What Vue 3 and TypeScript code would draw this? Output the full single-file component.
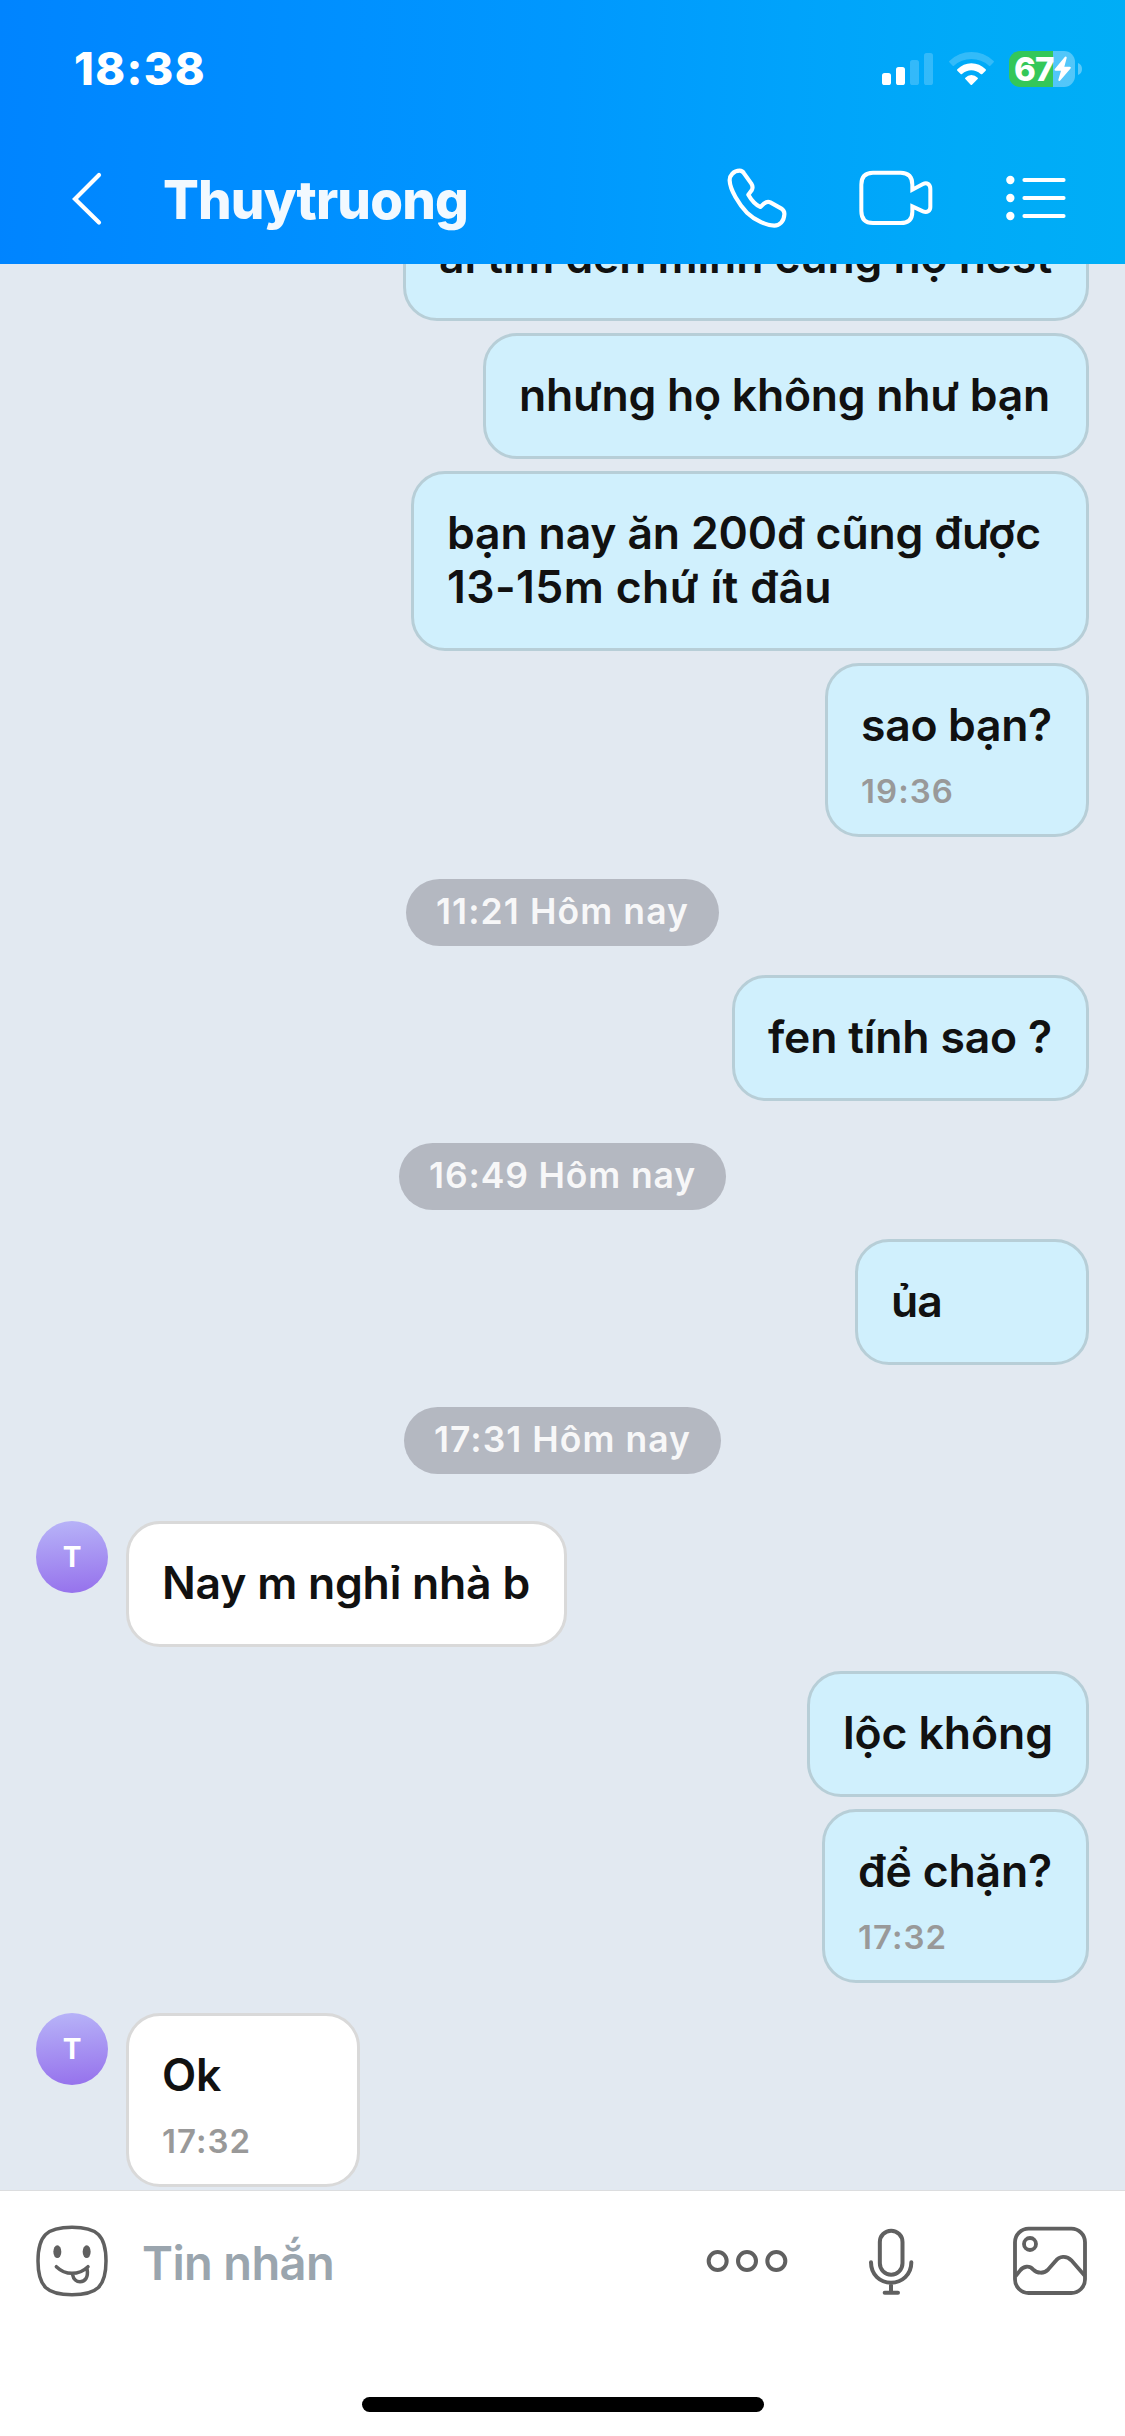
<script setup lang="ts">
interface Line { text: string; width: number }
interface Entry {
  kind: 'sent' | 'received' | 'date'
  lines: Line[]
  time?: Line
  width?: number
  gap: number
}

const entries: Entry[] = [
  { kind: 'sent', lines: [{ text: 'ai tìm đến mình cũng họ nest', width: 613 }], width: 686, gap: 0 },
  { kind: 'sent', lines: [{ text: 'nhưng họ không như bạn', width: 531 }], width: 606, gap: 12 },
  {
    kind: 'sent',
    lines: [
      { text: 'bạn nay ăn 200đ cũng được', width: 594 },
      { text: '13-15m chứ ít đâu', width: 385 },
    ],
    width: 678,
    gap: 12,
  },
  { kind: 'sent', lines: [{ text: 'sao bạn?', width: 191 }], time: { text: '19:36', width: 93 }, width: 264, gap: 12 },
  { kind: 'date', lines: [{ text: '11:21 Hôm nay', width: 253 }], gap: 42 },
  { kind: 'sent', lines: [{ text: 'fen tính sao ?', width: 284 }], width: 357, gap: 29 },
  { kind: 'date', lines: [{ text: '16:49 Hôm nay', width: 267 }], gap: 42 },
  { kind: 'sent', lines: [{ text: 'ủa', width: 51 }], width: 234, gap: 29 },
  { kind: 'date', lines: [{ text: '17:31 Hôm nay', width: 257 }], gap: 42 },
  { kind: 'received', lines: [{ text: 'Nay m nghỉ nhà b', width: 368 }], width: 441, gap: 47 },
  { kind: 'sent', lines: [{ text: 'lộc không', width: 210 }], width: 282, gap: 24 },
  { kind: 'sent', lines: [{ text: 'để chặn?', width: 194 }], time: { text: '17:32', width: 89 }, width: 267, gap: 12 },
  { kind: 'received', lines: [{ text: 'Ok', width: 59 }], time: { text: '17:32', width: 89 }, width: 234, gap: 30 },
]

// Adjusts letter spacing so that a text run takes the given advance width.
const vFit = {
  mounted(el: HTMLElement, binding: { value: number }) {
    const count = Array.from((el.textContent ?? '').trim()).length
    const natural = el.getBoundingClientRect().width
    el.style.letterSpacing = `${(binding.value - natural) / count}px`
  },
}
</script>

<template>
  <div class="screen">
    <header class="header">
      <div class="status">
        <span v-fit="132" class="clock">18:38</span>
        <div class="indicators">
          <svg class="signal" width="51" height="36" viewBox="0 0 51 36" fill="#fff">
            <rect x="0" y="22" width="9" height="12" rx="2.6" />
            <rect x="14" y="16" width="9" height="18" rx="2.6" />
            <rect x="28" y="9" width="9" height="25" rx="2.6" opacity=".2" />
            <rect x="42" y="2" width="9" height="32" rx="2.6" opacity=".2" />
          </svg>
          <svg class="wifi" width="45" height="36" viewBox="806 153 135 108" fill="#fff">
            <path opacity=".2" d="M807 183 Q835 156 873 156 Q912 156 940 183 Q942 185 940 187 L930 197 Q928 199 926 197 Q903 177 873 177 Q843 177 821 197 Q819 199 817 197 L807 187 Q805 185 807 183Z" />
            <path d="M831 208 Q849 190 873 190 Q898 190 916 208 Q918 210 916 212 L906 222 Q904 224 901 222 Q888 211 873 211 Q858 211 845 222 Q843 224 841 222 L831 212 Q829 210 831 208Z" />
            <path d="M855 233 Q863 225 873 225 Q884 225 892 233 Q894 235 892 237 L875 254 Q873 256 871 254 L855 237 Q853 235 855 233Z" />
          </svg>
          <div class="battery">
            <div class="cell">
              <span v-fit="39.5" class="percent">67</span>
              <svg class="bolt" width="18" height="26" viewBox="1123 169 54 78" fill="#fff">
                <path d="M1156 171 Q1162 169 1161 175 L1154 201 H1170 Q1176 202 1172 207 L1141 243 Q1136 246 1136 240 L1144 213 H1128 Q1122 212 1126 207Z" />
              </svg>
            </div>
            <svg width="4" height="12" viewBox="0 0 4 12" fill="#fff" opacity=".35"><path d="M0 0Q4 1.5 4 6T0 12Z" /></svg>
          </div>
        </div>
      </div>
      <nav class="nav">
        <svg class="back" width="32" height="54" viewBox="0 0 32 54" fill="none" stroke="#fff" stroke-width="4.2" stroke-linecap="round" stroke-linejoin="miter">
          <path d="M29 4L5 28L29 51.500" />
        </svg>
        <h1 class="title"><span v-fit="305">Thuytruong</span></h1>
        <svg class="phone" width="60" height="60" viewBox="142 502 180 180" fill="none" stroke="#fff" stroke-width="12.500" stroke-linejoin="round">
          <path d="M150 540C149 525 162 510 180 510C186 510 190 513 193 518L215 549C220 557 219 564 216 569L206 582C215 598 228 612 242 619L254 608C259 604 266 602 272 605L304 623C312 628 315 634 314 642C313 662 300 675 284 675C262 675 227 660 202 636C178 612 151 567 150 540Z" />
        </svg>
        <svg class="video" width="74" height="56" viewBox="536 509 222 168" fill="none" stroke="#fff" stroke-width="12">
          <path d="M696 568V553C696 529 684 517 661 517H578C555 517 543 530 543 553V632C543 656 555 668 578 668H661C684 668 696 656 696 634V618L728 633C740 638 750 632 750 620V566C750 552 740 545 728 551Z" />
        </svg>
        <svg class="list" width="60" height="46" viewBox="977 525 180 138" fill="#fff" stroke="#fff">
          <g stroke="none"><circle cx="990" cy="540" r="12.500" /><circle cx="990" cy="594" r="12.500" /><circle cx="990" cy="648" r="12.500" /></g>
          <path d="M1032 540H1150M1032 594H1150M1032 648H1150" stroke-width="11.500" stroke-linecap="round" />
        </svg>
      </nav>
    </header>

    <main class="chat">
      <div v-for="(entry, i) in entries" :key="i" class="row" :class="entry.kind" :style="{ marginTop: entry.gap + 'px' }">
        <div v-if="entry.kind === 'date'" class="pill"><span v-fit="entry.lines[0].width">{{ entry.lines[0].text }}</span></div>
        <template v-else>
          <div v-if="entry.kind === 'received'" class="avatar">T</div>
          <div class="bubble" :class="{ timed: entry.time }" :style="{ width: entry.width + 'px' }">
            <div v-for="line in entry.lines" :key="line.text" class="line"><span v-fit="line.width">{{ line.text }}</span></div>
            <div v-if="entry.time" class="time"><span v-fit="entry.time.width">{{ entry.time.text }}</span></div>
          </div>
        </template>
      </div>
    </main>

    <footer class="footer">
      <div class="composer">
        <svg width="74" height="74" viewBox="105 732 222 222" fill="none" stroke="#606060" stroke-width="10.500" stroke-linecap="round">
          <path d="M216 742C291 742 318 766 318 843C318 920 291 944 216 944C141 944 114 920 114 843C114 766 141 742 216 742Z" />
          <g fill="#606060" stroke="none"><ellipse cx="172" cy="815" rx="12" ry="19" /><ellipse cx="260" cy="815" rx="12" ry="19" /></g>
          <path d="M169 860Q190 880 216 880Q243 880 264 860M218 884C220 898 230 905 240 905C255 905 266 893 261 866" />
        </svg>
        <span class="placeholder"><span v-fit="192">Tin nhắn</span></span>
        <svg class="more" width="82" height="24" viewBox="138 236 246 72" fill="none" stroke="#606060" stroke-width="12">
          <circle cx="173" cy="272" r="27" /><circle cx="261" cy="272" r="27" /><circle cx="349" cy="272" r="27" />
        </svg>
        <svg class="mic" width="46" height="68" viewBox="624 174 138 204" fill="none" stroke="#606060" stroke-width="12" stroke-linecap="round">
          <rect x="659.500" y="182" width="68" height="132" rx="34" />
          <path d="M633 277C633 314 660 338 693 338C726 338 754 314 754 277M693 338V368M674 368H714" />
        </svg>
        <svg class="image" width="76" height="70" viewBox="1056 168 228 210" fill="none" stroke="#606060" stroke-width="11.500">
          <rect x="1065" y="176" width="210" height="193" rx="41" />
          <circle cx="1110" cy="222" r="18" />
          <path d="M1067 318L1080 302C1090 288 1108 286 1119 298C1132 311 1152 312 1165 298L1186 274C1198 257 1220 256 1234 271L1275 318" />
        </svg>
      </div>
      <div class="home" />
    </footer>
  </div>
</template>

<style>
body { margin: 0; }
</style>

<style scoped>
.screen {
  display: flex;
  flex-direction: column;
  width: 1125px;
  height: 2436px;
  overflow: hidden;
  background: #e2e9f1;
  color: #111;
  font-family: Inter, "Noto Sans", sans-serif;
  white-space: nowrap;
}
svg { display: block; flex: none; overflow: visible; }

.header {
  flex: none;
  height: 264px;
  background: linear-gradient(92deg, #0084ff 0%, #0090ff 30%, #0098fe 50%, #00a3fb 70%, #00aaf8 85%, #00aef6 100%);
  color: #fff;
}
.status { display: flex; justify-content: space-between; height: 136px; }
.clock { align-self: flex-start; margin: 42px 0 0 74px; font-size: 45px; line-height: 54px; font-weight: 800; }
.indicators { display: flex; margin: 51px 43px 0 0; }
.wifi { margin-left: 16px; }
.battery { display: flex; align-items: center; gap: 3px; height: 36px; margin-left: 15px; }
.cell {
  display: flex;
  align-items: center;
  box-sizing: border-box;
  width: 66px;
  height: 36px;
  padding-left: 5px;
  border-radius: 11px;
  background: linear-gradient(90deg, #34c759 44px, rgba(255, 255, 255, .32) 44px);
}
.percent { font-size: 33px; line-height: 36px; font-weight: 800; }

.nav { display: flex; align-items: center; height: 124px; }
.back { margin-left: 70px; }
.title { width: 306px; margin: 4px 0 0 61px; font-size: 53px; line-height: 64px; font-weight: 800; color: #f2f9ff; }
.phone { margin-left: 258px; }
.video { margin-left: 72px; }
.list { margin-left: 73px; }

.chat { flex: none; height: 1926px; padding: 0 36px; overflow: hidden; }
.row { display: flex; }
.row:first-child { height: 57px; align-items: flex-end; }
.sent { justify-content: flex-end; }
.date { justify-content: center; }
.bubble {
  flex: none;
  box-sizing: border-box;
  padding: 32px 32px 34px 33px;
  border: 3px solid #b7ced7;
  border-radius: 34px;
  background: #d0f0fd;
}
.received .bubble { margin-left: 18px; border-color: #d9d9d9; background: #fff; }
.bubble.timed { padding-bottom: 23px; }
.line { font-size: 44.5px; line-height: 54px; font-weight: 570; }
.time { margin-top: 19px; font-size: 33px; line-height: 40px; font-weight: 560; color: #999; }
.pill {
  height: 67px;
  padding: 0 30px;
  border-radius: 34px;
  background: #b4b8c1;
  color: #f7f7f8;
  font-size: 35.500px;
  line-height: 66px;
  font-weight: 560;
}
.avatar {
  width: 72px;
  height: 72px;
  border-radius: 50%;
  background: linear-gradient(175deg, #b8b5f8, #9570ec);
  color: #fff;
  font-size: 28px;
  line-height: 72px;
  font-weight: 700;
  text-align: center;
}

.footer {
  display: flex;
  flex-direction: column;
  align-items: center;
  justify-content: space-between;
  box-sizing: border-box;
  height: 246px;
  padding-bottom: 24px;
  border-top: 1px solid #dcdddf;
  background: #fff;
}
.composer { display: flex; align-items: center; width: 1125px; height: 140px; box-sizing: border-box; padding-left: 35px; }
.placeholder { width: 196px; margin: 4px 0 0 33px; color: #9aa5ae; font-size: 47px; line-height: 58px; font-weight: 600; }
.more { margin-left: 368px; }
.mic { margin: 2px 0 0 80px; }
.image { margin-left: 98px; }
.home { width: 402px; height: 15px; border-radius: 8px; background: #000; }
</style>
